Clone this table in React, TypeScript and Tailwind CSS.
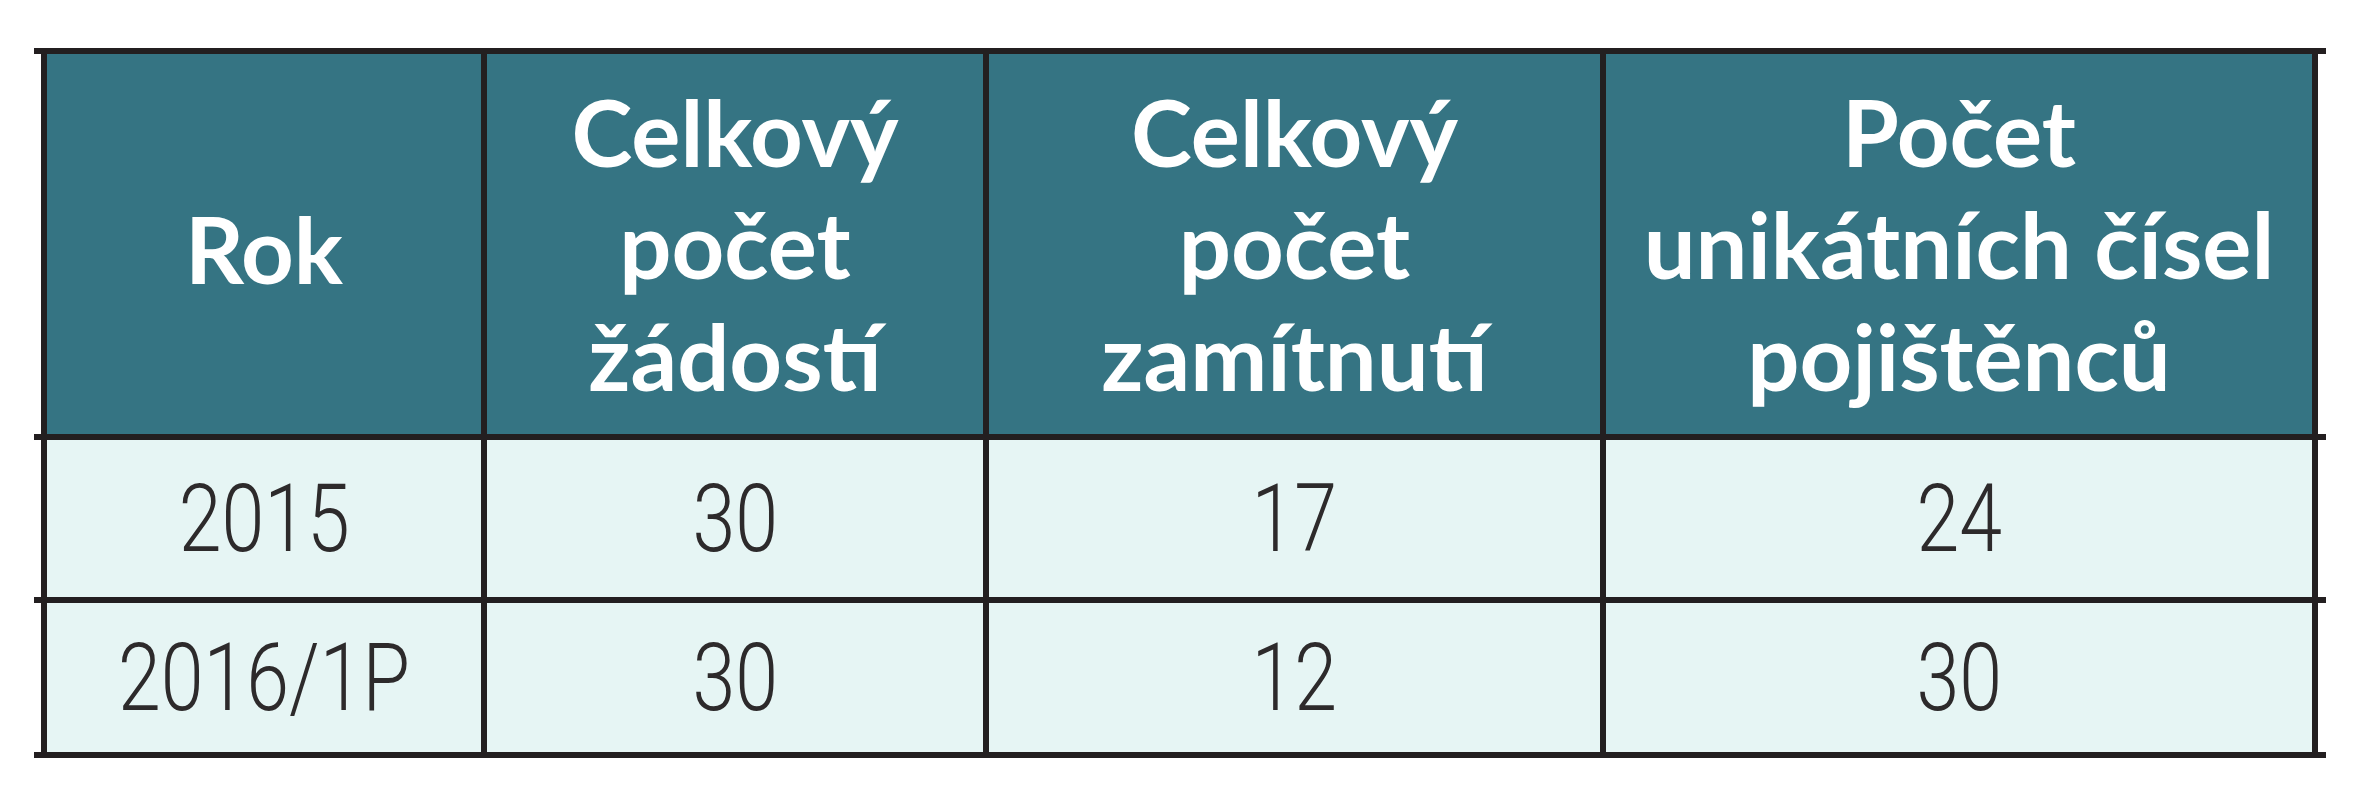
import * as React from "react";

type Row = { year: string; requests: string; rejected: string; unique: string; height: string };

const rows: Row[] = [
  { year: "2015", requests: "30", rejected: "17", unique: "24", height: "h-[157px]" },
  { year: "2016/1P", requests: "30", rejected: "12", unique: "30", height: "h-[149px]" }
];

const headFont = "font-['Lato','Liberation_Sans',sans-serif]";
const bodyFont = "font-['Roboto','Liberation_Sans',sans-serif]";

export default function App() {
  return (
    <div className="min-h-[800px] bg-white pt-[48px]">
      <div className="ml-[34px] w-[2292px] border-t-[6px] border-[#231f20]">
        {/* header row */}
        <div className="border-b-[6px] border-[#231f20]">
          <div className={`ml-[7px] mr-[8px] flex h-[380px] border-x-[6px] border-[#231f20] bg-[#357483] text-[92px] font-bold leading-[112px] text-white ${headFont}`}>
            <HeadCell className="w-[434px] pt-[10px]" lines={["Rok"]} />
            <HeadCell className="w-[502px] border-l-[6px] border-[#231f20]" lines={["Celkový", "počet", "žádostí"]} />
            <HeadCell className="w-[617px] border-l-[6px] border-[#231f20]" lines={["Celkový", "počet", "zamítnutí"]} />
            <HeadCell className="flex-1 border-l-[6px] border-[#231f20]" lines={["Počet", "unikátních čísel", "pojištěnců"]} />
          </div>
        </div>

        {rows.map((row) => (
          <div key={row.year} className="border-b-[6px] border-[#231f20]">
            <div className={`ml-[7px] mr-[8px] flex ${row.height} border-x-[6px] border-[#231f20] bg-[#e6f5f4] text-[94px] font-light leading-none text-[#2d2a2b] ${bodyFont}`}>
              <BodyCell className="w-[434px]" value={row.year} />
              <BodyCell className="w-[502px] border-l-[6px] border-[#231f20]" value={row.requests} />
              <BodyCell className="w-[617px] border-l-[6px] border-[#231f20]" value={row.rejected} />
              <BodyCell className="flex-1 border-l-[6px] border-[#231f20]" value={row.unique} />
            </div>
          </div>
        ))}
      </div>
    </div>
  );
}

function HeadCell({ className, lines }: { className: string; lines: string[] }) {
  return (
    <div className={`flex flex-col items-center justify-center text-center ${className}`}>
      {lines.map((line) => (
        <span key={line} className="block whitespace-nowrap">
          {line}
        </span>
      ))}
    </div>
  );
}

function BodyCell({ className, value }: { className: string; value: string }) {
  // the source face is a condensed one, so squeeze the digits a bit
  return (
    <div className={`flex items-center justify-center ${className}`}>
      <span className="inline-block scale-x-[0.82]">{value}</span>
    </div>
  );
}
